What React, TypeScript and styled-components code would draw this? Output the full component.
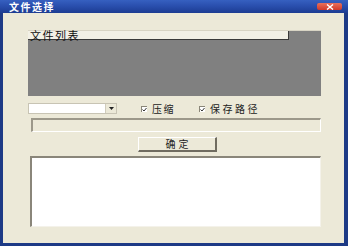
import React from 'react';
import styled, { createGlobalStyle } from 'styled-components';

const GlobalStyle = createGlobalStyle`
  *, *::before, *::after {
    box-sizing: border-box;
  }
  html, body {
    margin: 0;
    padding: 0;
    background: #ece9d8;
    overflow: hidden;
  }
`;

const FONT = `"Noto Sans CJK SC", "Noto Sans", sans-serif`;

export default function App() {
  return (
    <>
      <GlobalStyle />
      <Frame>
        <TitleBar>
          <Title>文件选择</Title>
          <CloseButton>
            <svg width="8" height="6" viewBox="0 0 8 6">
              <path d="M1 0.5 L7 5.5 M7 0.5 L1 5.5" stroke="#fff" strokeWidth="1.4" />
            </svg>
          </CloseButton>
        </TitleBar>

        <Client>
          <ListPanel>
            <ListHeader>文件列表</ListHeader>
          </ListPanel>

          <OptionsRow>
            <Combo>
              <ComboArrow>
                <svg width="5" height="3" viewBox="0 0 5 3">
                  <path d="M0 0 H5 L2.5 3 Z" fill="#222" />
                </svg>
              </ComboArrow>
            </Combo>
            <CheckItem $offset={24}>
              <CheckBox>
                <svg width="5" height="5" viewBox="0 0 5 5">
                  <path d="M0.5 2.5 L2 4 L4.5 1" stroke="#333" strokeWidth="1" fill="none" />
                </svg>
              </CheckBox>
              <CheckLabel $spacing={1.5}>压缩</CheckLabel>
            </CheckItem>
            <CheckItem $offset={24}>
              <CheckBox>
                <svg width="5" height="5" viewBox="0 0 5 5">
                  <path d="M0.5 2.5 L2 4 L4.5 1" stroke="#333" strokeWidth="1" fill="none" />
                </svg>
              </CheckBox>
              <CheckLabel $spacing={2.5}>保存路径</CheckLabel>
            </CheckItem>
          </OptionsRow>

          <Progress />

          <OkButton>确定</OkButton>

          <OutputBox />
        </Client>
      </Frame>
    </>
  );
}

const Frame = styled.div`
  width: 348px;
  height: 246px;
  display: flex;
  flex-direction: column;
  background: #1d3a86;
  font-family: ${FONT};
`;

const TitleBar = styled.div`
  height: 13px;
  flex: none;
  display: flex;
  align-items: center;
  justify-content: space-between;
  padding: 0 6px 0 9px;
  background: linear-gradient(to bottom, #3660c0 0%, #2a4fae 45%, #1c3c92 100%);
`;

const Title = styled.span`
  color: #fff;
  font-size: 10px;
  font-weight: 700;
  line-height: 13px;
  letter-spacing: 1.5px;
`;

const CloseButton = styled.div`
  width: 25px;
  height: 7px;
  border-radius: 2px;
  background: linear-gradient(to bottom, #e8705a, #d0382a);
  display: flex;
  align-items: center;
  justify-content: center;
`;

const Client = styled.div`
  flex: 1;
  margin: 0 4px 3px 3px;
  background: #ece9d8;
  padding: 17px 0 0 25px;
  display: flex;
  flex-direction: column;
  align-items: flex-start;
`;

const ListPanel = styled.div`
  width: 293px;
  height: 66px;
  background: #808080;
  border-top: 1px solid #d8d4c4;
`;

const ListHeader = styled.div`
  width: 261px;
  height: 9px;
  background: #f2f0e6;
  border-right: 1px solid #3a3a3a;
  border-bottom: 1px solid #3a3a3a;
  color: #111;
  font-size: 11px;
  line-height: 9px;
  padding-left: 2px;
  letter-spacing: 1.5px;
  white-space: nowrap;
`;

const OptionsRow = styled.div`
  display: flex;
  align-items: center;
  margin-top: 7px;
  height: 11px;
`;

const Combo = styled.div`
  width: 89px;
  height: 11px;
  background: #fff;
  border: 1px solid #c8c4b4;
  display: flex;
  justify-content: flex-end;
`;

const ComboArrow = styled.div`
  width: 11px;
  height: 9px;
  background: #ece9d8;
  border-left: 1px solid #d0ccbc;
  display: flex;
  align-items: center;
  justify-content: center;
`;

const CheckItem = styled.div<{ $offset: number }>`
  display: flex;
  align-items: center;
  margin-left: ${({ $offset }) => $offset}px;
  gap: 5px;
`;

const CheckBox = styled.div`
  width: 6px;
  height: 6px;
  background: #fff;
  border-top: 1px solid #8a8678;
  border-left: 1px solid #8a8678;
  display: flex;
  align-items: center;
  justify-content: center;
`;

const CheckLabel = styled.span<{ $spacing: number }>`
  color: #222;
  font-size: 10px;
  line-height: 11px;
  letter-spacing: ${({ $spacing }) => $spacing}px;
  white-space: nowrap;
`;

const Progress = styled.div`
  width: 290px;
  height: 14px;
  margin: 4px 0 0 3px;
  background: #ece9d8;
  border-top: 2px solid #9c988a;
  border-left: 2px solid #9c988a;
  border-right: 1px solid #fff;
  border-bottom: 1px solid #fff;
`;

const OkButton = styled.div`
  width: 79px;
  height: 15px;
  margin: 5px 0 0 110px;
  background: #ece9d8;
  border-top: 1px solid #fff;
  border-left: 1px solid #fff;
  border-right: 2px solid #706c60;
  border-bottom: 2px solid #706c60;
  color: #222;
  font-size: 10px;
  line-height: 12px;
  text-align: center;
  letter-spacing: 3px;
  padding-left: 3px;
`;

const OutputBox = styled.div`
  width: 291px;
  height: 71px;
  margin: 4px 0 0 2px;
  background: #fff;
  border-top: 2px solid #8a867a;
  border-left: 2px solid #8a867a;
  border-right: 1px solid #f4f2ea;
  border-bottom: 1px solid #f4f2ea;
`;
